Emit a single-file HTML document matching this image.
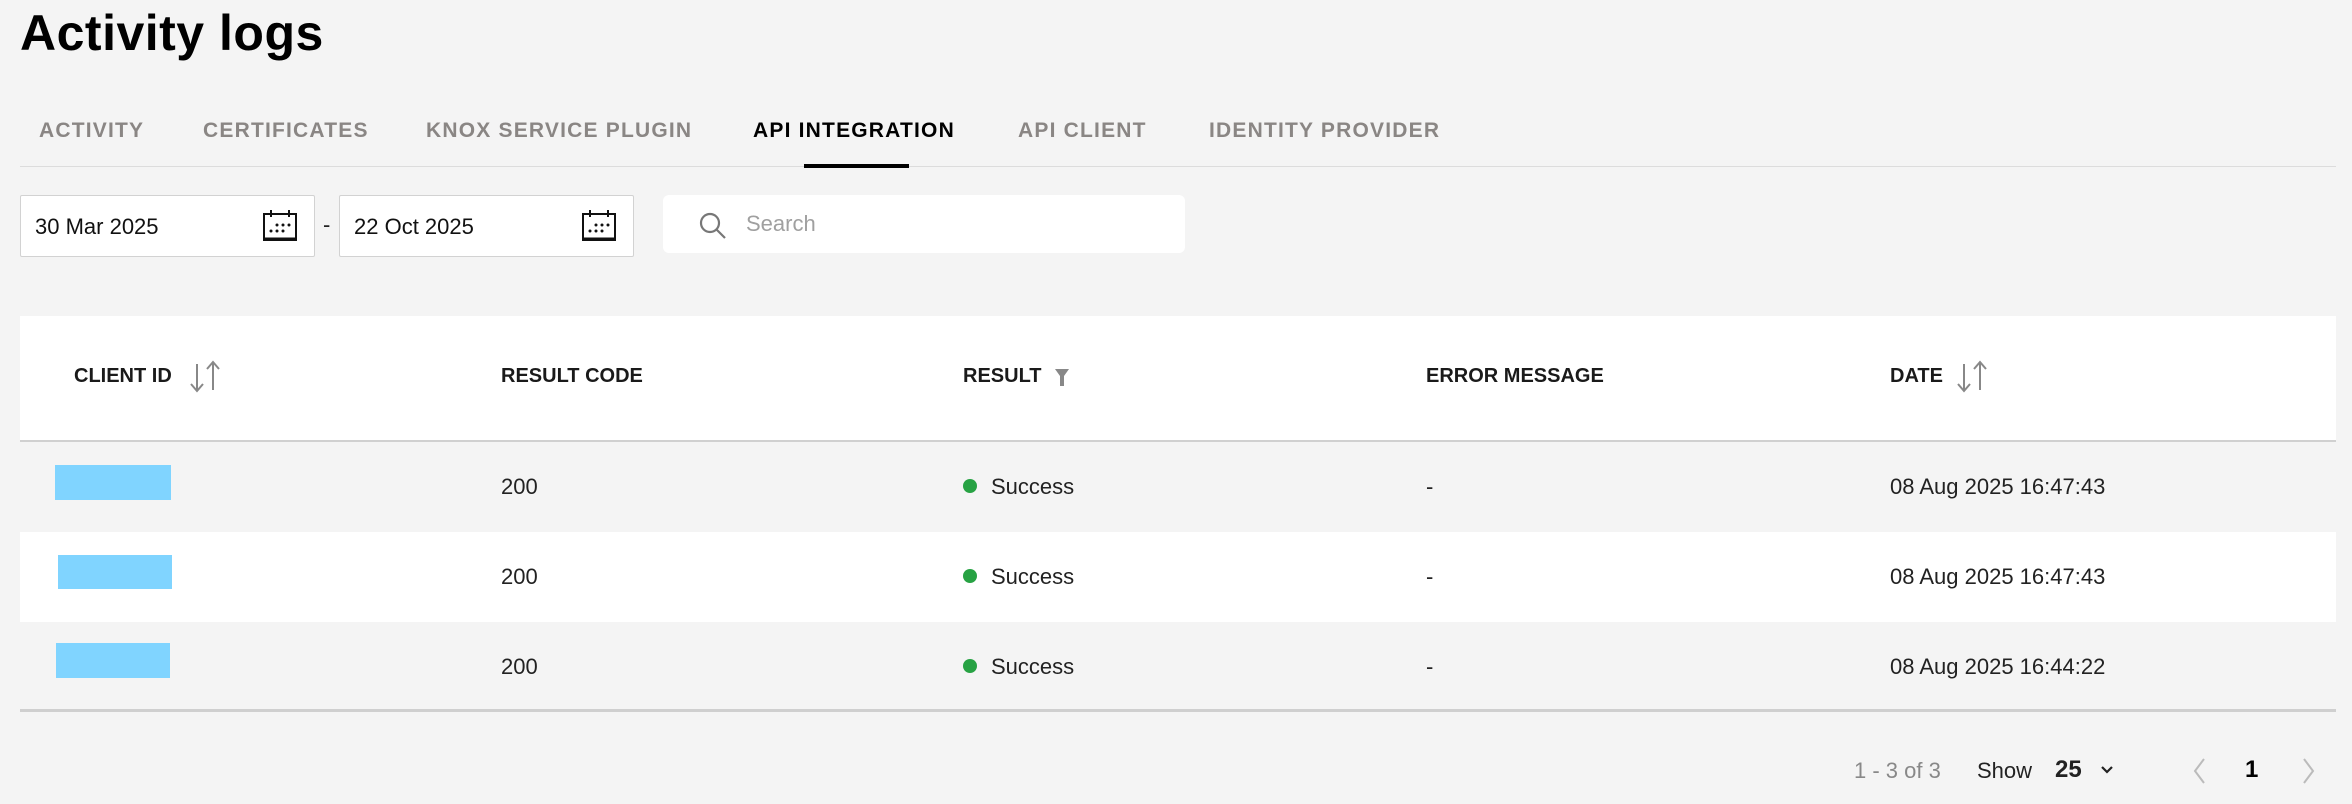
<!DOCTYPE html>
<html><head><meta charset="utf-8"><style>
*{margin:0;padding:0;box-sizing:border-box}
body{width:2352px;height:804px;background:#f4f4f4;font-family:"Liberation Sans",sans-serif;position:relative;overflow:hidden;color:#222}
.a{position:absolute;white-space:nowrap}
.title{left:20px;top:4px;font-size:50px;font-weight:bold;color:#000;letter-spacing:0.5px}
.tab{top:119px;font-size:21px;font-weight:bold;letter-spacing:1.2px;color:#8a8684}
.tab.on{color:#000}
.inp{background:#fff;border:1px solid #d2d2d2;border-radius:2px;top:195px;height:62px;width:295px}
.inp span{position:absolute;left:14px;top:18px;font-size:22px;color:#111}
.inp svg{position:absolute;right:16px;top:14px}
.th{top:365px;font-size:20px;font-weight:bold;color:#1a1a1a}
.td{font-size:22px;color:#222}
.row{position:absolute;left:20px;width:2316px;height:90px}
.blue{position:absolute;background:#80d4ff;width:116px;height:35px}
.dot{display:inline-block;width:14px;height:14px;border-radius:50%;background:#27a243;margin-right:14px;vertical-align:1px}
</style></head><body>
<div class="a title">Activity logs</div>
<div class="a tab" style="left:39px">ACTIVITY</div>
<div class="a tab" style="left:203px">CERTIFICATES</div>
<div class="a tab" style="left:426px">KNOX SERVICE PLUGIN</div>
<div class="a tab on" style="left:753px">API INTEGRATION</div>
<div class="a tab" style="left:1018px">API CLIENT</div>
<div class="a tab" style="left:1209px">IDENTITY PROVIDER</div>
<div class="a" style="left:20px;top:166px;width:2316px;height:1px;background:#dcdcdc"></div>
<div class="a" style="left:804px;top:164px;width:105px;height:4px;background:#000"></div>

<div class="a inp" style="left:20px"><span>30 Mar 2025</span>
<svg width="36" height="32" viewBox="0 0 36 32"><rect x="2" y="4" width="32" height="26" fill="none" stroke="#111" stroke-width="2"/><line x1="2" y1="29" x2="34" y2="29" stroke="#111" stroke-width="3"/><line x1="9" y1="0" x2="9" y2="7" stroke="#111" stroke-width="2"/><line x1="27" y1="0" x2="27" y2="7" stroke="#111" stroke-width="2"/><g fill="#111"><circle cx="15" cy="15" r="1.5"/><circle cx="21" cy="15" r="1.5"/><circle cx="27" cy="15" r="1.5"/><circle cx="9" cy="21" r="1.5"/><circle cx="15" cy="21" r="1.5"/><circle cx="21" cy="21" r="1.5"/></g></svg></div>
<div class="a" style="left:323px;top:212px;font-size:22px">-</div>
<div class="a inp" style="left:339px"><span>22 Oct 2025</span>
<svg width="36" height="32" viewBox="0 0 36 32"><rect x="2" y="4" width="32" height="26" fill="none" stroke="#111" stroke-width="2"/><line x1="2" y1="29" x2="34" y2="29" stroke="#111" stroke-width="3"/><line x1="9" y1="0" x2="9" y2="7" stroke="#111" stroke-width="2"/><line x1="27" y1="0" x2="27" y2="7" stroke="#111" stroke-width="2"/><g fill="#111"><circle cx="15" cy="15" r="1.5"/><circle cx="21" cy="15" r="1.5"/><circle cx="27" cy="15" r="1.5"/><circle cx="9" cy="21" r="1.5"/><circle cx="15" cy="21" r="1.5"/><circle cx="21" cy="21" r="1.5"/></g></svg></div>

<div class="a" style="left:663px;top:195px;width:522px;height:58px;background:#fff;border-radius:6px">
<svg style="position:absolute;left:36px;top:17px" width="30" height="28" viewBox="0 0 30 28"><circle cx="11" cy="11" r="9" fill="none" stroke="#777" stroke-width="2.2"/><line x1="17.5" y1="17.5" x2="26" y2="26" stroke="#777" stroke-width="2.2"/></svg>
<span style="position:absolute;left:83px;top:16px;font-size:22px;color:#a0a0a0">Search</span></div>

<div class="a" style="left:20px;top:316px;width:2316px;height:126px;background:#fff;border-bottom:2px solid #d0d0d0"></div>
<div class="a th" style="left:74px">CLIENT ID</div>
<svg class="a" style="left:188px;top:360px" width="36" height="34" viewBox="0 0 36 34"><g stroke="#888" stroke-width="2" fill="none"><line x1="9" y1="4" x2="9" y2="31"/><polyline points="3,24 9,31 15,24"/><line x1="25" y1="2" x2="25" y2="30"/><polyline points="19,9 25,2 31,9"/></g></svg>
<div class="a th" style="left:501px">RESULT CODE</div>
<div class="a th" style="left:963px">RESULT</div>
<svg class="a" style="left:1055px;top:369px" width="14" height="17" viewBox="0 0 14 17"><polygon points="0,0 14,0 9,7 9,17 5,17 5,7" fill="#888"/></svg>
<div class="a th" style="left:1426px">ERROR MESSAGE</div>
<div class="a th" style="left:1890px">DATE</div>
<svg class="a" style="left:1955px;top:360px" width="36" height="34" viewBox="0 0 36 34"><g stroke="#888" stroke-width="2" fill="none"><line x1="9" y1="4" x2="9" y2="31"/><polyline points="3,24 9,31 15,24"/><line x1="25" y1="2" x2="25" y2="30"/><polyline points="19,9 25,2 31,9"/></g></svg>

<div class="row" style="top:444px;background:#f4f4f4"></div>
<div class="row" style="top:532px;background:#fff"></div>
<div class="row" style="top:622px;background:#f4f4f4"></div>
<div class="a" style="left:20px;top:709px;width:2316px;height:3px;background:#cfcfcf"></div>

<div class="blue" style="left:55px;top:465px"></div>
<div class="blue" style="left:58px;top:555px;width:114px;height:34px"></div>
<div class="blue" style="left:56px;top:643px;width:114px"></div>

<div class="a td" style="left:501px;top:474px">200</div>
<div class="a td" style="left:963px;top:474px"><span class="dot"></span>Success</div>
<div class="a td" style="left:1426px;top:474px">-</div>
<div class="a td" style="left:1890px;top:474px">08 Aug 2025 16:47:43</div>

<div class="a td" style="left:501px;top:564px">200</div>
<div class="a td" style="left:963px;top:564px"><span class="dot"></span>Success</div>
<div class="a td" style="left:1426px;top:564px">-</div>
<div class="a td" style="left:1890px;top:564px">08 Aug 2025 16:47:43</div>

<div class="a td" style="left:501px;top:654px">200</div>
<div class="a td" style="left:963px;top:654px"><span class="dot"></span>Success</div>
<div class="a td" style="left:1426px;top:654px">-</div>
<div class="a td" style="left:1890px;top:654px">08 Aug 2025 16:44:22</div>

<div class="a" style="left:1854px;top:758px;font-size:22px;color:#888">1 - 3 of 3</div>
<div class="a" style="left:1977px;top:758px;font-size:22px;color:#222">Show</div>
<div class="a" style="left:2055px;top:756px;font-size:24px;font-weight:bold;color:#222">25</div>
<svg class="a" style="left:2100px;top:765px" width="14" height="10" viewBox="0 0 14 10"><polyline points="2,2 7,7 12,2" fill="none" stroke="#222" stroke-width="2.2"/></svg>
<svg class="a" style="left:2192px;top:757px" width="16" height="28" viewBox="0 0 16 28"><polyline points="12,2 3,14 12,26" fill="none" stroke="#bbb" stroke-width="2"/></svg>
<div class="a" style="left:2245px;top:756px;font-size:24px;font-weight:bold;color:#000">1</div>
<svg class="a" style="left:2300px;top:757px" width="16" height="28" viewBox="0 0 16 28"><polyline points="4,2 13,14 4,26" fill="none" stroke="#bbb" stroke-width="2"/></svg>
</body></html>
